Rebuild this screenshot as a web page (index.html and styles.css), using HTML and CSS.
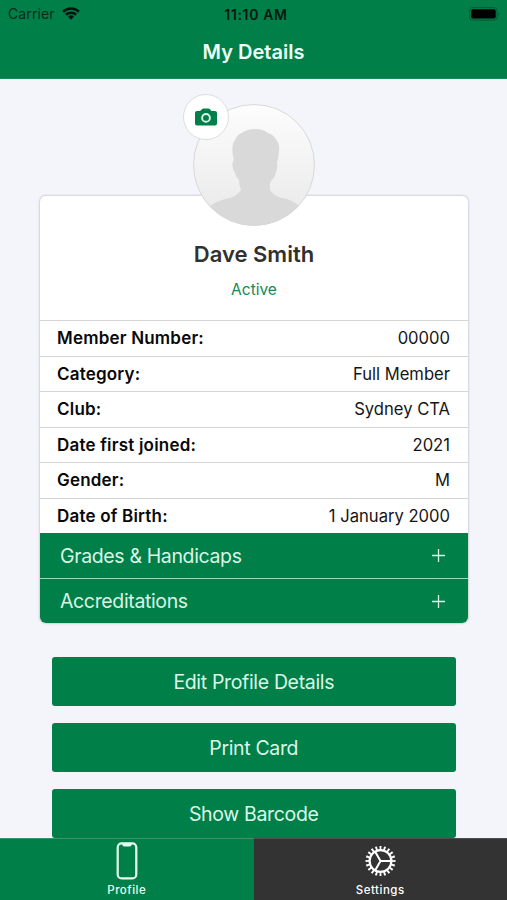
FILE: index.html
```html
<!DOCTYPE html>
<html lang="en">
<head>
<meta charset="utf-8">
<title>My Details</title>
<link rel="stylesheet" href="styles.css">
</head>
<body>
<div class="app">
  <header class="header">
    <div class="status">
      <div class="carrier"><span>Carrier</span>
        <svg class="wifi" viewBox="0 0 18 13" width="18" height="13"><g fill="none" stroke="#03140c" stroke-width="2.6"><path d="M1.1 4.7A11.4 11.4 0 0 1 16.9 4.7"/><path d="M4 7.8A7.2 7.2 0 0 1 14 7.8"/></g><path d="M9 12.7L6.1 9.8A4.1 4.1 0 0 1 11.9 9.8Z" fill="#03140c"/></svg>
      </div>
      <time class="clock">11:10 AM</time>
      <svg class="battery" viewBox="0 0 32 14" width="32" height="14"><rect x=".6" y=".6" width="27.5" height="12.5" rx="3.2" fill="none" stroke="#075535" stroke-width="1"/><rect x="2.2" y="2.2" width="24.5" height="9.3" rx="1.7" fill="#000"/><path d="M29.6 4.8Q31.4 6.8 29.6 9Z" fill="#075535"/></svg>
    </div>
    <h1 class="title">My Details</h1>
  </header>
  <main class="content">
    <section class="card">
      <div class="person">
        <div class="avatar">
          <svg viewBox="0 0 122 122" width="122" height="122">
            <defs><linearGradient id="shade" x1="0" y1="0" x2="0" y2="1"><stop offset="0" stop-color="#fdfdfd"/><stop offset="1" stop-color="#e8e8e8"/></linearGradient><clipPath id="disc"><circle cx="61" cy="61" r="60.5"/></clipPath></defs>
            <circle cx="61" cy="61" r="60.5" fill="url(#shade)"/>
            <path clip-path="url(#disc)" fill="#d9d9d9" d="M8 107L17 102Q24 97 32 95Q44 93 48 86Q46 81 46 76Q43 73 42 69Q39 65 39.5 59L41 56Q39 50 39.5 44Q39 40 42 36Q44 31 48.5 29Q54 25 62 25Q70 25 75 29Q81 31 83.5 36Q87 40 86 46Q86 53 84 59Q85 64 83 68Q82 74 78.5 76Q76 81 77 86Q81 92 88.5 94Q98 95 105 101L114 107V124H8Z"/>
            <circle cx="61" cy="61" r="60.5" fill="none" stroke="#d8d8d9"/>
          </svg>
          <span class="camera"><svg viewBox="0 0 22 18" width="22" height="18"><path fill="#007f49" d="M2 3H5L7 1.3Q7.5.5 8.5.5H13.5Q14.5.5 15 1.3L16.5 3H20Q22 3 22 5V15.5Q22 17.5 20 17.5H2Q0 17.5 0 15.5V5Q0 3 2 3Z"/><circle cx="11" cy="9.9" r="3.9" fill="none" stroke="#dff5e9" stroke-width="1.9"/></svg></span>
        </div>
        <h2 class="name">Dave Smith</h2>
        <p class="state">Active</p>
      </div>
      <dl class="details">
        <div class="row"><dt>Member Number:</dt><dd>00000</dd></div>
        <div class="row"><dt>Category:</dt><dd>Full Member</dd></div>
        <div class="row"><dt>Club:</dt><dd>Sydney CTA</dd></div>
        <div class="row"><dt>Date first joined:</dt><dd>2021</dd></div>
        <div class="row"><dt>Gender:</dt><dd>M</dd></div>
        <div class="row"><dt>Date of Birth:</dt><dd>1 January 2000</dd></div>
      </dl>
      <div class="fold"><span>Grades &amp; Handicaps</span><svg viewBox="0 0 13 13" width="13" height="13"><path d="M6.5 0V13M0 6.5H13" stroke="#d9f5e6" stroke-width="1.3"/></svg></div>
      <div class="fold"><span>Accreditations</span><svg viewBox="0 0 13 13" width="13" height="13"><path d="M6.5 0V13M0 6.5H13" stroke="#d9f5e6" stroke-width="1.3"/></svg></div>
    </section>
    <div class="actions">
      <button class="action">Edit Profile Details</button>
      <button class="action">Print Card</button>
      <button class="action">Show Barcode</button>
    </div>
  </main>
  <nav class="tabs">
    <a class="tab active"><svg viewBox="0 0 22 38" width="22" height="38"><rect x="1.7" y="1.4" width="18.6" height="35" rx="4" fill="none" stroke="#e6fff1" stroke-width="2.2"/><path d="M6 1.5H16Q15.5 4.6 13.7 4.6H8.3Q6.5 4.6 6 1.5Z" fill="#e6fff1"/></svg><span>Profile</span></a>
    <a class="tab"><svg viewBox="-16.5 -19 32 38" width="32" height="38"><g fill="none" stroke="#fff"><circle r="10.9" stroke-width="2.2"/><circle r="13.2" stroke-width="3.6" pathLength="40" stroke-dasharray=".9 1.1" stroke-dashoffset=".45"/><path stroke-width="2" d="M0 0H10.5M0 0L-5.3 -9.2M0 0L-5.3 9.2"/></g></svg><span>Settings</span></a>
  </nav>
</div>
</body>
</html>
```
FILE: styles.css
```css
* { box-sizing: border-box; }
body { margin: 0; font-family: Inter, "Liberation Sans", sans-serif; color: #080808; background: #f3f5fa; }
h1, h2, p, dl, dd { margin: 0; }
svg { display: block; flex: none; }
.app { width: 507px; height: 900px; display: flex; flex-direction: column; overflow: hidden; }
.header { height: 79px; flex: none; background: #007f49; border-bottom: 1px solid #198b5b; }
.status { height: 28px; padding: 0 6px 0 8px; display: grid; grid-template-columns: 1fr auto 1fr; align-items: center; }
.carrier { display: flex; align-items: center; gap: 7px; font-size: 14px; line-height: 17px; padding-bottom: 1px; color: #052b1a; letter-spacing: .1px; }
.clock { font-size: 14px; font-weight: 600; color: #03190f; letter-spacing: .65px; padding-left: 3px; }
.battery { justify-self: end; }
.title { text-align: center; font-size: 20px; line-height: 49px; font-weight: 600; color: #effff6; }
.content { flex: 1; min-height: 0; overflow: hidden; padding: 116px 38px 0 39px; background: #f3f5fa; }
.card { height: 429px; border: 1px solid #d8dadc; border-radius: 7px; background: #fff; box-shadow: 0 0 2px #d8dadc; }
.person { height: 124px; display: flex; flex-direction: column; align-items: center; }
.avatar { position: relative; width: 122px; height: 122px; margin-top: -92px; flex: none; }
.camera { position: absolute; left: -10px; top: -10px; width: 46px; height: 46px; border: 1px solid #dcdddf; border-radius: 50%; background: #fff; display: grid; place-items: center; }
.name { margin-top: 12px; font-size: 22px; line-height: 32px; font-weight: 600; color: #303030; }
.state { margin-top: 8px; font-size: 15.5px; line-height: 24px; color: #168a58; }
.row { height: 35.5px; border-top: 1px solid #d4d5d7; padding: 0 18px 0 17px; display: flex; align-items: center; justify-content: space-between; font-size: 16.6px; }
dt { font-weight: 600; font-size: 17px; letter-spacing: .2px; }
dd { color: #151515; }
.fold { height: 45px; padding: 0 23px 0 20px; display: flex; align-items: center; justify-content: space-between; background: #007f49; color: #d9f5e6; font-size: 19.5px; letter-spacing: -.36px; }
.fold + .fold { border-top: 1.5px solid #9bd7ba; border-radius: 0 0 6px 6px; height: 45px; }
.actions { margin: 33px 13.5px 0 13px; display: flex; flex-direction: column; gap: 17px; }
.action { height: 49px; flex: none; padding: 0; border: 0; border-radius: 3px; background: #007f49; color: #dbf7e8; font: 400 19.5px Inter, "Liberation Sans", sans-serif; letter-spacing: -.34px; }
.tabs { height: 62px; flex: none; display: flex; }
.tab { flex: 1; background: #333; border-top: 1px solid #4d4d4d; color: #fff; display: flex; flex-direction: column; align-items: center; padding-top: 3px; font-size: 11.5px; font-weight: 500; line-height: 14px; gap: 3px; letter-spacing: .5px; }
.tab.active { background: #007f49; border-color: #36966b; color: #e6fff1; }
```
